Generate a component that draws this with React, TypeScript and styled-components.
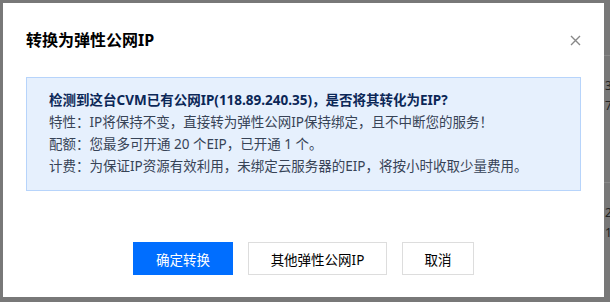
import styled, { createGlobalStyle } from "styled-components";

const GlobalStyle = createGlobalStyle`
  html, body {
    margin: 0;
    padding: 0;
    background: #787878;
  }
  body {
    font-family: "Noto Sans", "Noto Sans CJK SC", sans-serif;
  }
`;

const Page = styled.div`
  position: relative;
  width: 610px;
  height: 302px;
  overflow: hidden;
  background: #787878;
`;

const BehindColumn = styled.div`
  margin-left: 604px;
  padding-top: 55px;
  display: flex;
  flex-direction: column;
`;

const BehindRow = styled.div`
  border-top: 1px solid #8a8a8a;
  height: 127px;
  padding: 20px 0 0 1px;
  box-sizing: border-box;
  font-size: 12px;
  line-height: 20px;
  color: #222;
`;

const Dialog = styled.div`
  position: absolute;
  left: 3px;
  top: 3px;
  width: 601px;
  height: 294px;
  background: #fff;
  box-sizing: border-box;
  padding: 26px 23px 22px;
  display: flex;
  flex-direction: column;
`;

const Header = styled.div`
  display: flex;
  align-items: center;
  justify-content: space-between;
  height: 22px;
`;

const Title = styled.h2`
  margin: 0;
  font-size: 16px;
  font-weight: 700;
  color: #000;
  line-height: 22px;
`;

const CloseButton = styled.button`
  border: none;
  background: none;
  padding: 0;
  margin-right: -1px;
  width: 14px;
  height: 14px;
  display: flex;
  align-items: center;
  justify-content: center;
  cursor: pointer;
`;

const InfoBox = styled.div`
  margin-top: 26px;
  border: 1px solid #b7d4fb;
  background: #e6f0fd;
  padding: 11px 22px 13px;
  font-size: 13.5px;
  line-height: 22px;
`;

const Line = styled.p<{ $strong?: boolean }>`
  margin: 0;
  white-space: nowrap;
  font-weight: ${({ $strong }) => ($strong ? 700 : 400)};
  color: ${({ $strong }) => ($strong ? "#0b2757" : "#374356")};
`;

const Footer = styled.div`
  margin-top: auto;
  display: flex;
  justify-content: center;
  gap: 15px;
`;

const Button = styled.button<{ $primary?: boolean }>`
  height: 33px;
  padding: 0;
  font-family: inherit;
  font-size: 13.5px;
  cursor: pointer;
  box-sizing: border-box;
  border: 1px solid ${({ $primary }) => ($primary ? "#006eff" : "#dddddd")};
  background: ${({ $primary }) => ($primary ? "#006eff" : "#fff")};
  color: ${({ $primary }) => ($primary ? "#fff" : "#000")};
`;

const App = () => (
  <>
    <GlobalStyle />
    <Page>
      <BehindColumn>
        <BehindRow>
          3<br />7
        </BehindRow>
        <BehindRow>
          2<br />1
        </BehindRow>
      </BehindColumn>
      <Dialog>
        <Header>
          <Title>转换为弹性公网IP</Title>
          <CloseButton aria-label="关闭">
            <svg width="11" height="11" viewBox="0 0 11 11">
              <path d="M1 1L10 10M10 1L1 10" stroke="#888" strokeWidth="1.4" />
            </svg>
          </CloseButton>
        </Header>
        <InfoBox>
          <Line $strong>检测到这台CVM已有公网IP(118.89.240.35)，是否将其转化为EIP?</Line>
          <Line>特性：IP将保持不变，直接转为弹性公网IP保持绑定，且不中断您的服务！</Line>
          <Line>配额：您最多可开通 20 个EIP，已开通 1 个。</Line>
          <Line>计费：为保证IP资源有效利用，未绑定云服务器的EIP，将按小时收取少量费用。</Line>
        </InfoBox>
        <Footer>
          <Button $primary style={{ width: 100 }}>确定转换</Button>
          <Button style={{ width: 139 }}>其他弹性公网IP</Button>
          <Button style={{ width: 72 }}>取消</Button>
        </Footer>
      </Dialog>
    </Page>
  </>
);

export default App;
